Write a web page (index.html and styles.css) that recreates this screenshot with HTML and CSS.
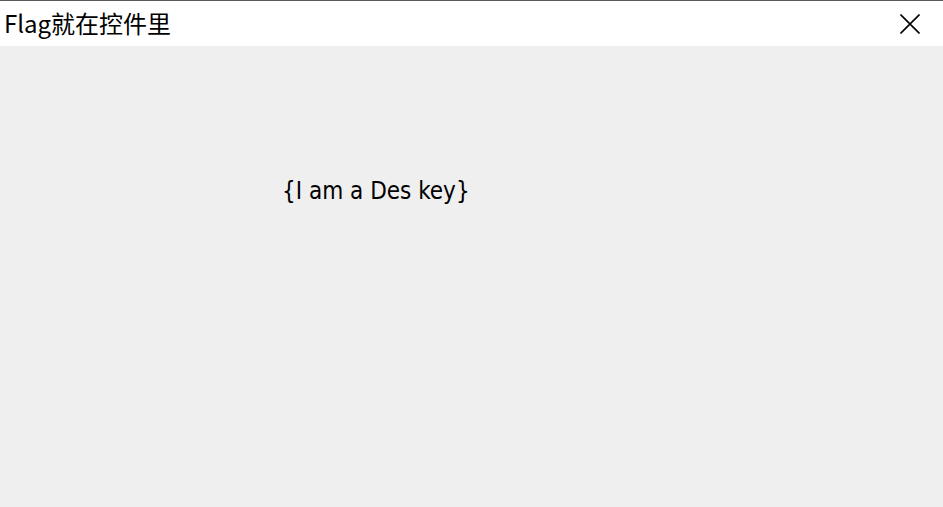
FILE: index.html
```html
<!DOCTYPE html>
<html lang="zh">
<head>
<meta charset="utf-8">
<title>Flag就在控件里</title>
<link rel="stylesheet" href="styles.css">
</head>
<body>
<div class="window">
  <div class="titlebar">
    <span class="title">Flag就在控件里</span>
    <button class="close" aria-label="关闭">
      <svg width="20" height="20" viewBox="0 0 20 20"><path d="M0.5 0.5 L19.5 19.5 M19.5 0.5 L0.5 19.5" stroke="#000" stroke-width="1.6" fill="none"/></svg>
    </button>
  </div>
  <div class="client">
    <p class="label">{I am a Des key}</p>
  </div>
</div>
</body>
</html>
```
FILE: styles.css
```css
html, body {
  margin: 0;
  padding: 0;
  height: 100%;
}
body {
  background: #efefef;
  overflow: hidden;
}
.window {
  display: flex;
  flex-direction: column;
  height: 100%;
  border-top: 1px solid #5a5a5a;
  box-sizing: border-box;
}
.titlebar {
  height: 45px;
  background: #ffffff;
  display: flex;
  align-items: center;
  justify-content: space-between;
  flex: none;
}
.title {
  font-family: "Noto Sans CJK SC", "Noto Sans", sans-serif;
  font-size: 24px;
  color: #000;
  padding-left: 4px;
  line-height: 1;
  margin-top: -1px;
}
.close {
  border: 0;
  background: transparent;
  padding: 0;
  margin-right: 23px;
  width: 20px;
  height: 20px;
  display: flex;
}
.client {
  flex: 1;
  background: #efefef;
  padding: 131px 0 0 282px;
}
.label {
  margin: 0;
  font-family: "DejaVu Sans Condensed", "DejaVu Sans", sans-serif;
  font-size: 24px;
  line-height: 28px;
  color: #000;
}
```
